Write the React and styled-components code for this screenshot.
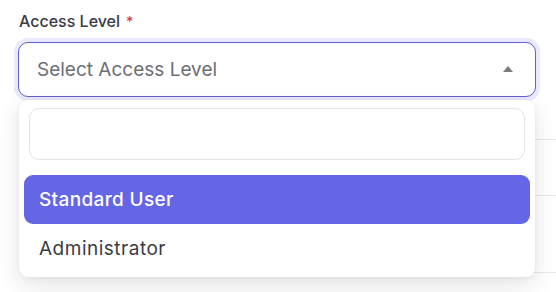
import React from "react";
import styled, { createGlobalStyle } from "styled-components";

const GlobalStyle = createGlobalStyle`
  html, body {
    margin: 0;
    background: #ffffff;
  }
  body {
    font-family: "Inter", "Noto Sans", sans-serif;
    color: #333;
  }
`;

const Page = styled.div`
  position: relative;
  width: 556px;
  height: 292px;
  overflow: hidden;
  background: #fff;
`;

// faint rows of the form that sits behind the open menu
const Backdrop = styled.div`
  position: absolute;
  inset: 0;
  z-index: 0;
`;

const BackRow = styled.div`
  position: absolute;
  left: 300px;
  right: 0;
  top: ${(p) => p.top}px;
  height: ${(p) => p.h}px;
  border-top: 1px solid #e9e9ec;
  border-bottom: ${(p) => (p.open ? "none" : "1px solid #e9e9ec")};
`;

const Field = styled.div`
  position: relative;
  z-index: 1;
  display: flex;
  flex-direction: column;
  padding: 10px 20px 0 18px;
`;

const Label = styled.label`
  font-size: 16px;
  font-weight: 500;
  color: #383c44;
  margin: 0 0 9px 1px;
  line-height: 22px;
`;

const Required = styled.span`
  color: #dc3545;
  margin-left: 6px;
  font-size: 14px;
`;

const SelectWrap = styled.div`
  position: relative;
`;

const SelectBox = styled.div`
  box-sizing: border-box;
  height: 55px;
  display: flex;
  align-items: center;
  justify-content: space-between;
  padding: 0 22px 0 18px;
  border: 1px solid #5e62cf;
  border-radius: 10px;
  background: #fff;
  box-shadow: 0 0 0 4px rgba(99, 102, 230, 0.14);
`;

const Placeholder = styled.span`
  font-size: 19px;
  color: #6c6f73;
`;

const Caret = styled.span`
  width: 0;
  height: 0;
  border-left: 5px solid transparent;
  border-right: 5px solid transparent;
  border-bottom: 6px solid #7a7a7a;
  margin-top: -1px;
`;

const Menu = styled.div`
  position: absolute;
  top: calc(100% + 3px);
  left: 1px;
  right: 1px;
  box-sizing: border-box;
  padding: 8px 5px 5px;
  background: #fff;
  border-radius: 9px;
  box-shadow: 0 8px 24px rgba(0, 0, 0, 0.11), 0 1px 5px rgba(0, 0, 0, 0.06);
`;

const Search = styled.input`
  display: block;
  box-sizing: border-box;
  width: calc(100% - 10px);
  height: 52px;
  margin: 0 5px 15px;
  border: 1px solid #e3e3e6;
  border-radius: 10px;
  outline: none;
  background: #fff;
`;

const Option = styled.div`
  height: ${(p) => (p.active ? 49 : 48)}px;
  display: flex;
  align-items: center;
  padding: 0 15px;
  border-radius: 9px;
  font-size: 19px;
  letter-spacing: ${(p) => (p.active ? 0.35 : 0.5)}px;
  font-weight: ${(p) => (p.active ? 500 : 400)};
  color: ${(p) => (p.active ? "#ffffff" : "#3a3d42")};
  background: ${(p) => (p.active ? "#6466e5" : "transparent")};
`;

const options = ["Standard User", "Administrator"];

const App = () => {
  return (
    <Page>
      <GlobalStyle />
      <Backdrop>
        <BackRow top={139} h={55} />
        <BackRow top={272} h={40} open />
      </Backdrop>
      <Field>
        <Label>
          Access Level<Required>*</Required>
        </Label>
        <SelectWrap>
          <SelectBox>
            <Placeholder>Select Access Level</Placeholder>
            <Caret />
          </SelectBox>
          <Menu>
            <Search />
            {options.map((o, i) => (
              <Option key={o} active={i === 0}>
                {o}
              </Option>
            ))}
          </Menu>
        </SelectWrap>
      </Field>
    </Page>
  );
};

export default App;
